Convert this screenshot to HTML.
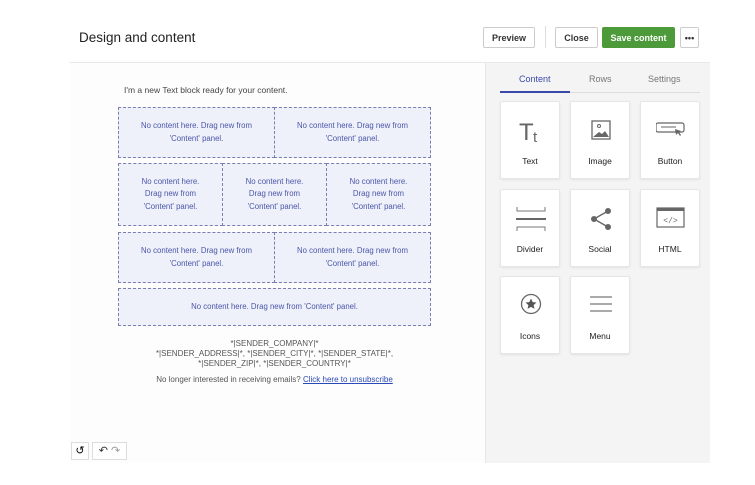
<!DOCTYPE html>
<html><head><meta charset="utf-8"><style>
*{margin:0;padding:0;box-sizing:border-box}
body{width:755px;height:485px;background:#fff;font-family:"Liberation Sans",sans-serif;position:relative;overflow:hidden}
.a{position:absolute}
.btn{position:absolute;top:27px;height:21px;border:1px solid #ccc;background:#fff;font-size:9px;font-weight:bold;color:#333;display:flex;align-items:center;justify-content:center;border-radius:2px}
.ph{position:absolute;background:#eef0fa;border:1px dashed #7a7fb0;color:#4a57a8;font-size:7.8px;line-height:12.5px;text-align:center;display:flex;align-items:center;justify-content:center;padding:0 14px}
.tile{position:absolute;width:60px;height:78px;background:#fff;border:1px solid #e6e6e6;border-radius:2px;box-shadow:0 1px 2px rgba(0,0,0,.08)}
.tile span{position:absolute;top:54px;left:0;width:100%;text-align:center;font-size:8.5px;color:#222}
.tile svg{position:absolute;left:15px;top:14px}
.ft{font-size:8px;color:#555;text-align:center}
</style></head><body>
<div class="a" style="left:79px;top:30px;font-size:13.5px;color:#222">Design and content</div>
<div class="btn" style="left:483px;width:52px">Preview</div>
<div class="a" style="left:545px;top:26px;width:1px;height:22px;background:#ddd"></div>
<div class="btn" style="left:555px;width:43px">Close</div>
<div class="btn" style="left:602px;width:73px;background:#4c9a3a;border-color:#4c9a3a;color:#fff">Save content</div>
<div class="btn" style="left:680px;width:19px">•••</div>
<div class="a" style="left:70px;top:62px;width:640px;height:1px;background:#e8e8e8"></div>
<div class="a" style="left:70px;top:63px;width:415px;height:400px;background:#fdfdfd"></div>
<div class="a" style="left:485px;top:63px;width:225px;height:400px;background:#f4f4f4;border-left:1px solid #e6e6e6"></div>
<div class="a" style="left:124px;top:85px;font-size:8.5px;color:#444">I'm a new Text block ready for your content.</div>
<div class="ph" style="left:118px;top:107px;width:157px;height:51px">No content here. Drag new from 'Content' panel.</div>
<div class="ph" style="left:274px;top:107px;width:157px;height:51px">No content here. Drag new from 'Content' panel.</div>
<div class="ph" style="left:118px;top:163px;width:105px;height:63px">No content here. Drag new from 'Content' panel.</div>
<div class="ph" style="left:222px;top:163px;width:105px;height:63px">No content here. Drag new from 'Content' panel.</div>
<div class="ph" style="left:326px;top:163px;width:105px;height:63px">No content here. Drag new from 'Content' panel.</div>
<div class="ph" style="left:118px;top:232px;width:157px;height:51px">No content here. Drag new from 'Content' panel.</div>
<div class="ph" style="left:274px;top:232px;width:157px;height:51px">No content here. Drag new from 'Content' panel.</div>
<div class="ph" style="left:118px;top:288px;width:313px;height:38px">No content here. Drag new from 'Content' panel.</div>
<div class="a ft" style="left:118px;top:339px;width:313px;line-height:10px">*|SENDER_COMPANY|*<br>*|SENDER_ADDRESS|*, *|SENDER_CITY|*, *|SENDER_STATE|*,<br>*|SENDER_ZIP|*, *|SENDER_COUNTRY|*</div>
<div class="a ft" style="left:118px;top:375px;width:313px">No longer interested in receiving emails? <span style="color:#2a49b8;text-decoration:underline">Click here to unsubscribe</span></div>
<div class="a" style="left:71px;top:442px;width:18px;height:18px;border:1px solid #ddd;background:#fff;font-size:11px;text-align:center;line-height:16px">↺</div>
<div class="a" style="left:92px;top:442px;width:35px;height:18px;border:1px solid #ddd;background:#fff;font-size:11px;line-height:16px;text-align:center;color:#333">↶ <span style="color:#999">↷</span></div>
<div class="a" style="left:519px;top:74px;font-size:9px;color:#3a4aa8">Content</div>
<div class="a" style="left:589px;top:74px;font-size:9px;color:#777">Rows</div>
<div class="a" style="left:648px;top:74px;font-size:9px;color:#777">Settings</div>
<div class="a" style="left:500px;top:92px;width:200px;height:1px;background:#ddd"></div>
<div class="a" style="left:500px;top:91px;width:70px;height:2px;background:#3a4aa8"></div>
<div class="tile" style="left:500px;top:101px"><svg width="30" height="30"><text x="3" y="24" font-size="24" font-family="Liberation Sans" fill="#666" font-weight="300">T</text><text x="17" y="26" font-size="15" fill="#666" font-family="Liberation Sans">t</text></svg><span>Text</span></div>
<div class="tile" style="left:570px;top:101px"><svg width="30" height="30"><rect x="6" y="5" width="18" height="18" fill="none" stroke="#666" stroke-width="1.3"/><circle cx="13" cy="10" r="1.5" fill="none" stroke="#666"/><path d="M7 21l6-5 3 2 3-3 4 6z" fill="#666"/></svg><span>Image</span></div>
<div class="tile" style="left:640px;top:101px"><svg width="30" height="30"><rect x="0" y="7" width="28" height="9" rx="2" fill="none" stroke="#666" stroke-width="1.2"/><path d="M5 11h15" stroke="#666"/><path d="M19 13l6 2-2 1 2 3-1 1-2-3-2 2z" fill="#666"/></svg><span>Button</span></div>
<div class="tile" style="left:500px;top:189px"><svg width="30" height="30"><path d="M1 3v4h28V3M1 27v-4h28v4" fill="none" stroke="#777" stroke-width="1"/><path d="M0 15h30" stroke="#666" stroke-width="2"/></svg><span>Divider</span></div>
<div class="tile" style="left:570px;top:189px"><svg width="30" height="30"><path d="M8 15l14-8M8 15l14 8" stroke="#666" stroke-width="1.3"/><circle cx="8" cy="15" r="3" fill="#666"/><circle cx="22" cy="7" r="3" fill="#666"/><circle cx="22" cy="23" r="3" fill="#666"/></svg><span>Social</span></div>
<div class="tile" style="left:640px;top:189px"><svg width="30" height="30"><rect x="1" y="4" width="27" height="19" fill="none" stroke="#666" stroke-width="1.2"/><rect x="1" y="4" width="27" height="3" fill="#666"/><text x="14.5" y="19" font-size="8" text-anchor="middle" fill="#666" font-family="Liberation Mono">&lt;/&gt;</text></svg><span>HTML</span></div>
<div class="tile" style="left:500px;top:276px"><svg width="30" height="30"><circle cx="15" cy="13" r="9.5" fill="none" stroke="#666" stroke-width="1.3"/><path d="M15 7.5l1.7 3.6 3.8.4-2.9 2.6.9 3.8-3.5-2-3.5 2 .9-3.8-2.9-2.6 3.8-.4z" fill="#555"/></svg><span>Icons</span></div>
<div class="tile" style="left:570px;top:276px"><svg width="30" height="30"><path d="M4 6h22M4 13h22M4 20h22" stroke="#777" stroke-width="1.2"/></svg><span>Menu</span></div>
</body></html>
